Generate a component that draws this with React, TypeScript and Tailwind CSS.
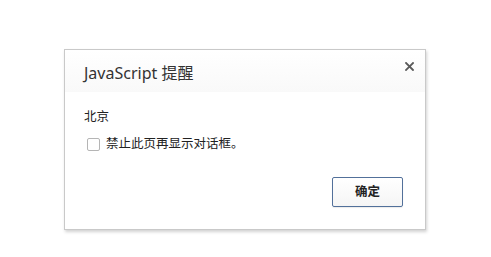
import React from "react";

export default function App() {
  return (
    <div className="w-[491px] h-[257px] bg-white pt-[49px] pl-[64px]" style={{ fontFamily: '"Noto Sans", "Noto Sans CJK SC", sans-serif' }}>
      <div className="relative w-[362px] h-[181px] bg-white border border-[#c9c9c9] shadow-[1px_2px_3px_rgba(0,0,0,0.18)] flex flex-col">
        <div className="h-[42px] bg-gradient-to-b from-white to-[#f9f9f9] pl-[19px] pt-[12px]">
          <div className="text-[16px] leading-[22px] text-[#333]">JavaScript 提醒</div>
        </div>
        <div className="absolute top-[10px] right-[10px] w-[12px] h-[12px] flex items-center justify-center">
          <svg width="9" height="9" viewBox="0 0 9 9">
            <path d="M1 1 L8 8 M8 1 L1 8" stroke="#5a5a5a" strokeWidth="1.8" strokeLinecap="square" />
          </svg>
        </div>
        <div className="pl-[19px] pt-[16px] flex flex-col gap-[9px]">
          <div className="text-[12.5px] leading-[18px] text-[#222]">北京</div>
          <div className="flex items-center h-[18px]">
            <div className="w-[13px] h-[13px] border border-[#b5b5b5] rounded-[2px] bg-white ml-[3px]" />
            <div className="ml-[6px] text-[12.5px] leading-[18px] text-[#222]">禁止此页再显示对话框。</div>
          </div>
        </div>
        <div className="flex-1" />
        <div className="flex justify-end pr-[22px] pb-[22px]">
          <div className="w-[71px] h-[30px] border border-[#52709a] rounded-[2px] bg-gradient-to-b from-white to-[#f5f5f5] flex items-center justify-center text-[12.5px] font-bold text-[#222] shadow-[0_1px_1px_rgba(0,0,0,0.08)]">
            确定
          </div>
        </div>
      </div>
    </div>
  );
}
